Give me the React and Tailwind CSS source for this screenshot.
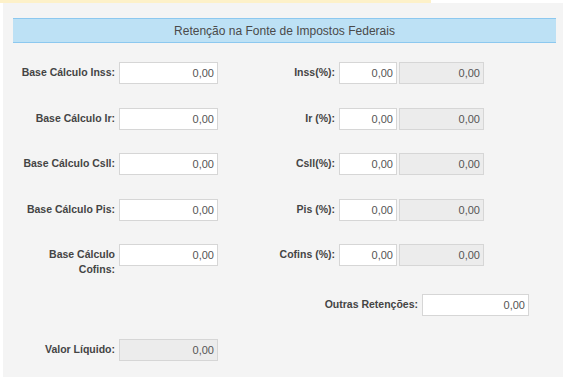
const ROWS = [
  { label: 'Base Cálculo Inss:', pct: 'Inss(%):', mt: 'mt-0' },
  { label: 'Base Cálculo Ir:', pct: 'Ir (%):', mt: 'mt-[24px]' },
  { label: 'Base Cálculo Csll:', pct: 'Csll(%):', mt: 'mt-[23px]' },
  { label: 'Base Cálculo Pis:', pct: 'Pis (%):', mt: 'mt-[24px]' },
  { label: 'Base Cálculo Cofins:', pct: 'Cofins (%):', mt: 'mt-[23px]' },
];

const labelText = 'pt-[3px] text-right text-[10.5px] font-bold leading-[15px] text-[#444]';

const Field = ({ width, disabled, value = '0,00' }) => (
  <div
    className={`h-[22px] shrink-0 border border-[#d6d6d6] pr-[3px] text-right text-[11px] leading-[20px] text-[#555] ${
      disabled ? 'bg-[#ececec]' : 'bg-white'
    } ${width}`}
  >
    {value}
  </div>
);

const App = () => {
  return (
    <div className="h-[377px] w-[570px] overflow-hidden bg-white font-['Liberation_Sans',Arial,sans-serif]">
      {/* yellow notice strip */}
      <div className="h-[3px] w-[431px] bg-[#fdf1c9]" />

      <div className="ml-[3px] h-[374px] w-[560px] bg-[#f4f4f4] pt-[15px]">
        {/* Header */}
        <div className="ml-[10px] mr-[7px] flex h-[25px] items-center justify-center border-y border-[#8cc8ef] bg-[#bde1f5] text-[12px] text-[#4a4a4a]">
          Retenção na Fonte de Impostos Federais
        </div>

        {/* Rows */}
        <div className="mt-[19px] flex flex-col">
          {ROWS.map((row) => (
            <div key={row.label} className={`flex items-start ${row.mt}`}>
              <div className="flex w-[116px] shrink-0 justify-end pr-[4px]">
                <div className={`w-[98px] ${labelText}`}>{row.label}</div>
              </div>
              <Field width="w-[99px]" />
              <div className={`w-[121px] shrink-0 pr-[4px] ${labelText}`}>{row.pct}</div>
              <Field width="w-[58px]" />
              <div className="w-[2px] shrink-0" />
              <Field width="w-[85px]" disabled />
            </div>
          ))}

          <div className="mt-[17px] flex items-start">
            <div className={`w-[419px] shrink-0 pr-[4px] ${labelText}`}>Outras Retenções:</div>
            <Field width="w-[107px]" />
          </div>

          <div className="mt-[23px] flex items-start">
            <div className="flex w-[116px] shrink-0 justify-end pr-[4px]">
              <div className={`w-[98px] ${labelText}`}>Valor Líquido:</div>
            </div>
            <Field width="w-[99px]" disabled />
          </div>
        </div>
      </div>
    </div>
  );
};

export default App;
